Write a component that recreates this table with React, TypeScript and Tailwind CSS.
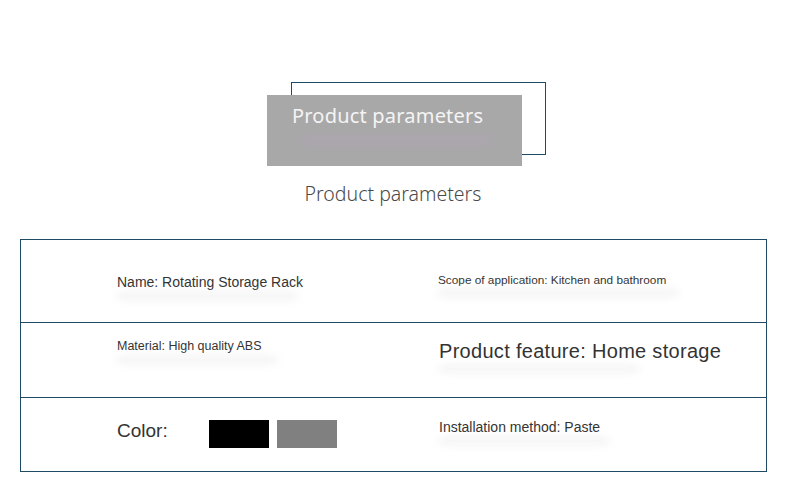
import React from 'react';

const border = 'border-[#1f4a63]';

const Blur: React.FC<{ w: number }> = ({ w }) => (
  <div
    className="mt-[3px] h-[6px] rounded-full bg-[#e6e6e6] blur-[4px] opacity-60"
    style={{ width: w }}
  />
);

const App: React.FC = () => {
  return (
    <div
      className="w-[790px] h-[496px] bg-white overflow-hidden text-[#333]"
      style={{ fontFamily: '"Liberation Sans", Arial, sans-serif' }}
    >
      <div className="pt-[82px] flex flex-col">
        <div className="relative ml-[267px] w-[279px] h-[85px]">
          <div className={`absolute left-[24px] top-0 w-[255px] h-[73px] border ${border}`} />
          <div className="absolute left-0 top-[13px] w-[255px] h-[71px] bg-[#a8a8a8] pl-[25px] pt-[9px] overflow-hidden">
            <div
              className="text-[#f4f4f4] text-[20px] leading-[24px] tracking-[0.2px]"
              style={{ fontFamily: '"Noto Sans", sans-serif' }}
            >
              Product parameters
            </div>
            <div className="mt-[8px] ml-[10px] h-[10px] w-[190px] bg-[#b0a4b4] blur-[4px] opacity-60" />
          </div>
        </div>
        <div
          className="self-center ml-[-4px] mt-[14px] text-[19.5px] leading-[26px] font-light text-[#4a4a4a]"
          style={{ fontFamily: '"Noto Sans", sans-serif' }}
        >
          Product parameters
        </div>
      </div>

      <div className={`mx-[20px] mt-[32px] w-[747px] border ${border}`}>
        <div className={`flex h-[83px] border-b ${border}`}>
          <div className="w-[417px] pl-[96px] pt-[34px]">
            <div className="text-[14px] leading-[16px]">Name: Rotating Storage Rack</div>
            <Blur w={180} />
          </div>
          <div className="flex-1 pt-[33px]">
            <div className="text-[11.8px] leading-[14px]">Scope of application: Kitchen and bathroom</div>
            <Blur w={240} />
          </div>
        </div>
        <div className={`flex h-[75px] border-b ${border}`}>
          <div className="w-[417px] pl-[96px] pt-[16px]">
            <div className="text-[12.5px] leading-[15px]">Material: High quality ABS</div>
            <Blur w={160} />
          </div>
          <div className="flex-1 pt-[17px] pl-[1px]">
            <div className="text-[20px] leading-[23px] tracking-[0.3px]">Product feature: Home storage</div>
            <Blur w={200} />
          </div>
        </div>
        <div className="flex h-[73px]">
          <div className="w-[417px] pl-[96px] pt-[22px] flex items-start">
            <div className="text-[19px] leading-[22px] w-[92px]">Color:</div>
            <div className="w-[60px] h-[28px] bg-black" />
            <div className="ml-[8px] w-[60px] h-[28px] bg-[#808080]" />
          </div>
          <div className="flex-1 pt-[21px] pl-[1px]">
            <div className="text-[14px] leading-[16px]">Installation method: Paste</div>
            <Blur w={170} />
          </div>
        </div>
      </div>
    </div>
  );
};

export default App;
